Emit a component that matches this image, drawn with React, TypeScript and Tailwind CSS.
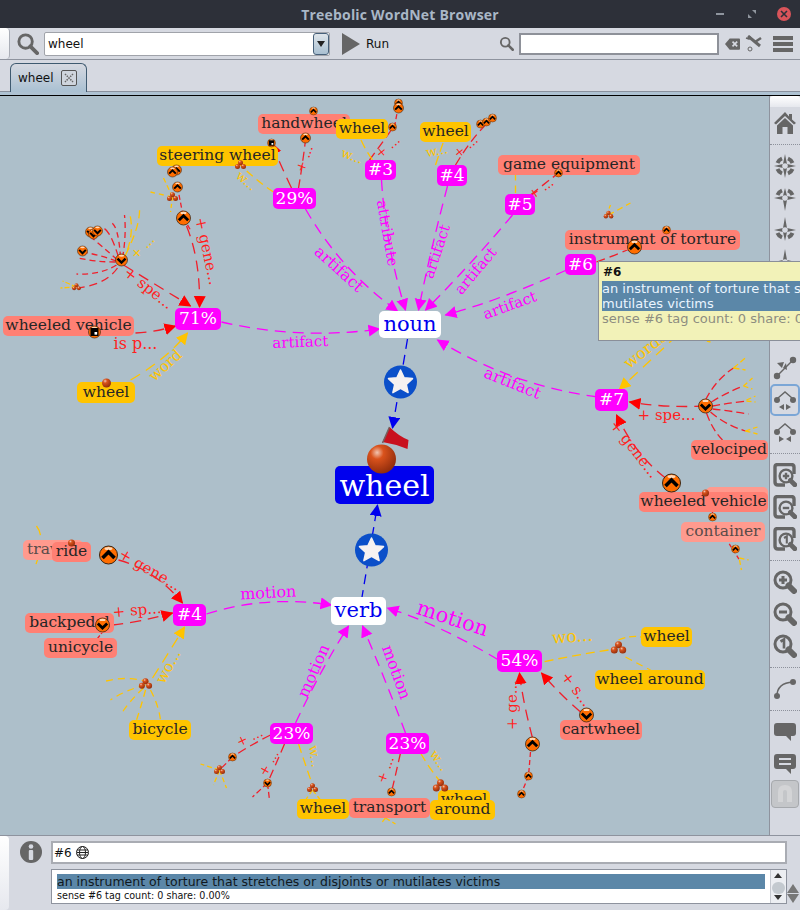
import React from "react";

const G = "#666666";

type Box = { x: number; y: number; w: number; h: number; t: string };

const magenta: Box[] = [
  { x: 175, y: 308, w: 46, h: 22, t: "71%" },
  { x: 273, y: 188, w: 43, h: 21, t: "29%" },
  { x: 365, y: 160, w: 31, h: 20, t: "#3" },
  { x: 437, y: 165, w: 30, h: 21, t: "#4" },
  { x: 505, y: 194, w: 30, h: 21, t: "#5" },
  { x: 565, y: 254, w: 31, h: 21, t: "#6" },
  { x: 595, y: 389, w: 33, h: 22, t: "#7" },
  { x: 173, y: 604, w: 33, h: 22, t: "#4" },
  { x: 497, y: 650, w: 45, h: 22, t: "54%" },
  { x: 270, y: 723, w: 43, h: 21, t: "23%" },
  { x: 386, y: 733, w: 43, h: 21, t: "23%" },
];

const salmon: Box[] = [
  { x: 258, y: 114, w: 92, h: 20, t: "handwheel" },
  { x: 498, y: 155, w: 142, h: 20, t: "game equipment" },
  { x: 565, y: 230, w: 175, h: 20, t: "instrument of torture" },
  { x: 3, y: 316, w: 131, h: 20, t: "wheeled vehicle" },
  { x: 691, y: 440, w: 77, h: 20, t: "velociped" },
  { x: 639, y: 492, w: 129, h: 20, t: "wheeled vehicle" },
  { x: 52, y: 542, w: 39, h: 20, t: "ride" },
  { x: 25, y: 613, w: 89, h: 20, t: "backpedal" },
  { x: 44, y: 638, w: 73, h: 20, t: "unicycle" },
  { x: 560, y: 720, w: 82, h: 20, t: "cartwheel" },
];

const yellow: Box[] = [
  { x: 157, y: 146, w: 121, h: 20, t: "steering wheel" },
  { x: 420, y: 122, w: 51, h: 20, t: "wheel" },
  { x: 77, y: 382, w: 58, h: 21, t: "wheel" },
  { x: 129, y: 720, w: 62, h: 20, t: "bicycle" },
  { x: 641, y: 627, w: 51, h: 20, t: "wheel" },
  { x: 595, y: 670, w: 110, h: 20, t: "wheel around" },
  { x: 297, y: 799, w: 52, h: 20, t: "wheel" },
  { x: 438, y: 790, w: 52, h: 20, t: "wheel" },
  { x: 430, y: 800, w: 65, h: 20, t: "around" },
];

type Edge = [string, string];

const magentaEdges: string[] = [
  "M221 322 Q300 340 379 329",
  "M305 209 Q340 270 397 311",
  "M381 180 Q385 245 405 310",
  "M447 186 Q430 250 418 310",
  "M512 215 Q470 265 425 310",
  "M566 270 Q500 300 445 315",
  "M597 397 Q510 385 437 340",
  "M206 614 Q265 595 331 605",
  "M498 660 Q440 625 387 608",
  "M295 723 Q320 670 348 626",
  "M405 733 Q385 680 362 626",
];

const redArrows: string[] = [
  "M123 265 L190 306",
  "M186 226 Q200 260 199 307",
  "M135 333 Q155 332 175 326",
  "M291 188 Q280 165 271 143",
  "M705 406 Q665 408 629 402",
  "M665 478 Q635 455 616 415",
  "M118 560 Q155 570 182 603",
  "M112 625 Q140 622 172 613",
  "M532 738 Q522 700 519 673",
  "M580 712 Q560 695 541 673",
];

const redLines: Edge[] = [
  ["M298 188 Q302 165 305 140", "9 5"],
  ["M369 160 Q380 145 393 127", "9 5"],
  ["M394 127 L398 105", "5 3"],
  ["M455 165 Q470 140 485 125", "9 5"],
  ["M530 195 Q545 183 558 173", "9 5"],
  ["M596 262 Q615 255 634 247", "9 5"],
  ["M177 187 L183 218", "5 3"],
  ["M183 218 L190 230", "5 3"],
  // fan left of 71%
  ["M118 257 Q108 225 100 228", "8 4"],
  ["M120 258 Q118 225 110 222", "6 4"],
  ["M122 258 Q126 235 124 215", "6 4"],
  ["M117 260 Q100 245 88 235", "6 4"],
  ["M116 261 Q100 255 82 252", "6 4"],
  ["M115 262 Q95 262 78 258", "6 4"],
  ["M116 265 Q100 275 76 274", "6 4"],
  ["M117 268 Q105 285 76 288", "8 5"],
  // fan of velociped
  ["M705 400 Q715 380 733 368", "8 4"],
  ["M711 402 Q725 393 743 386", "8 4"],
  ["M712 406 Q728 403 746 401", "8 4"],
  ["M712 409 Q730 411 748 414", "8 4"],
  ["M710 412 Q725 425 745 431", "8 4"],
  ["M706 413 Q712 430 722 440", "8 4"],
  ["M712 505 L712 517", "4 2"],
  ["M725 538 L739 560", "4 3"],
  ["M92 645 L102 632", "5 2"],
  ["M51 555 L88 556", "5 3"],
  ["M270 735 Q250 745 232 757", "9 5"],
  ["M232 757 L219 770", "6 3"],
  ["M284 744 Q275 765 267 783", "9 5"],
  ["M267 783 L252 797", "6 3"],
  ["M267 783 L269 800", "6 3"],
  ["M400 753 Q395 775 391 792", "9 5"],
  ["M530 752 L528 776", "5 3"],
  ["M528 776 L521 793", "5 3"],
  ["M612 218 L608 212", "3 2"],
];

const yellowArrows: string[] = [
  "M130 380 Q165 360 187 333",
  "M152 678 Q170 650 184 627",
  "M677 335 Q645 365 619 389",
];

const yellowLines: Edge[] = [
  ["M372 160 Q365 150 360 139", "9 5"],
  ["M435 165 Q440 150 443 142", "9 5"],
  ["M515 193 Q515 185 515 175", "8 5"],
  ["M273 192 Q255 180 240 165", "8 5"],
  ["M240 165 L232 150", "5 4"],
  ["M172 197 L163 178", "5 3"],
  ["M172 197 L150 192", "5 4"],
  ["M172 197 L170 212", "4 3"],
  ["M122 262 Q135 235 129 213", "8 5"],
  ["M125 255 Q140 225 139 208", "8 5"],
  ["M76 287 L62 281", "5 2"],
  ["M76 287 L60 288", "5 2"],
  ["M608 215 L630 203", "6 4"],
  ["M606 215 L610 205", "4 3"],
  ["M677 335 L710 342", "6 4"],
  ["M733 368 L746 357", "6 3"],
  ["M733 368 L745 370", "6 3"],
  ["M743 386 L752 378", "5 3"],
  ["M743 386 L752 389", "5 3"],
  ["M746 400 L755 396", "5 3"],
  ["M746 401 L755 402", "5 3"],
  ["M745 431 L757 427", "5 3"],
  ["M745 431 L757 434", "5 3"],
  ["M739 560 L741 570", "5 3"],
  ["M739 558 L748 560", "5 3"],
  ["M148 682 Q125 675 102 682", "7 5"],
  ["M145 685 Q125 690 110 700", "7 5"],
  ["M143 688 Q130 700 122 712", "7 5"],
  ["M145 690 Q141 705 136 720", "7 5"],
  ["M150 690 Q158 705 160 720", "7 5"],
  ["M608 650 Q575 655 542 662", "9 5"],
  ["M625 657 Q640 665 650 670", "7 5"],
  ["M618 640 Q630 635 641 637", "7 4"],
  ["M36 526 Q47 540 31 575", "10 20"],
  ["M298 744 Q305 765 312 785", "9 5"],
  ["M312 790 L305 800", "5 3"],
  ["M312 790 L320 800", "5 3"],
  ["M420 753 Q430 770 440 782", "9 5"],
  ["M219 770 L200 764", "5 3"],
  ["M219 770 L213 785", "5 3"],
  ["M219 770 L226 788", "5 3"],
  ["M385 818 L380 824", "5 3"],
  ["M385 818 L395 824", "5 3"],
];

type Label = { x: number; y: number; r: number; s: number; c: string; t: string };
const M = "#ff00ff";
const R = "#ff1f1f";
const Y = "#ffc400";
const edgeLabels: Label[] = [
  { x: 300, y: 347, r: -2, s: 15, c: M, t: "artifact" },
  { x: 335, y: 273, r: 42, s: 16, c: M, t: "artifact" },
  { x: 382, y: 234, r: 80, s: 15, c: M, t: "attribute" },
  { x: 441, y: 253, r: -72, s: 15, c: M, t: "artifact" },
  { x: 479, y: 274, r: -50, s: 15, c: M, t: "artifact" },
  { x: 511, y: 310, r: -20, s: 15, c: M, t: "artifact" },
  { x: 510, y: 388, r: 22, s: 16, c: M, t: "artifact" },
  { x: 268, y: 598, r: -3, s: 16, c: M, t: "motion" },
  { x: 450, y: 625, r: 18, s: 21, c: M, t: "motion" },
  { x: 318, y: 673, r: -66, s: 16, c: M, t: "motion" },
  { x: 391, y: 674, r: 70, s: 16, c: M, t: "motion" },
  { x: 145, y: 292, r: 38, s: 15, c: R, t: "+ spe..." },
  { x: 202, y: 252, r: 78, s: 15, c: R, t: "+ gene..." },
  { x: 135, y: 349, r: 0, s: 16, c: R, t: "is p..." },
  { x: 168, y: 369, r: -42, s: 15, c: Y, t: "word" },
  { x: 666, y: 420, r: 0, s: 15, c: R, t: "+ spe..." },
  { x: 630, y: 452, r: 52, s: 15, c: R, t: "+ gene..." },
  { x: 147, y: 574, r: 30, s: 15, c: R, t: "+ gene..." },
  { x: 137, y: 615, r: -5, s: 15, c: R, t: "+ sp..." },
  { x: 172, y: 669, r: -62, s: 15, c: Y, t: "wo..." },
  { x: 516, y: 705, r: -90, s: 15, c: R, t: "+ ge..." },
  { x: 572, y: 692, r: 52, s: 15, c: R, t: "+ s..." },
  { x: 572, y: 642, r: -4, s: 17, c: Y, t: "wo..." },
  { x: 648, y: 354, r: -38, s: 16, c: Y, t: "words" },
  { x: 308, y: 160, r: -70, s: 13, c: R, t: "+ ..." },
  { x: 390, y: 150, r: -40, s: 13, c: R, t: "+ ..." },
  { x: 468, y: 150, r: -40, s: 13, c: R, t: "+ ..." },
  { x: 350, y: 160, r: 20, s: 13, c: Y, t: "w..." },
  { x: 437, y: 155, r: -10, s: 13, c: Y, t: "w..." },
  { x: 543, y: 192, r: -35, s: 13, c: R, t: "+ ..." },
  { x: 243, y: 184, r: 40, s: 13, c: Y, t: "w..." },
  { x: 145, y: 250, r: -45, s: 13, c: Y, t: "+ ..." },
  { x: 251, y: 741, r: -25, s: 13, c: R, t: "+ ..." },
  { x: 272, y: 765, r: -60, s: 13, c: R, t: "+ ..." },
  { x: 310, y: 757, r: 82, s: 13, c: Y, t: "w..." },
  { x: 389, y: 771, r: -70, s: 13, c: R, t: "+ ..." },
  { x: 435, y: 763, r: 55, s: 13, c: Y, t: "w..." },
];

type Btn = [number, number, number, "up" | "down" | "box"];
const buttons: Btn[] = [
  [108, 555, 9, "up"],
  [671, 483, 9, "up"],
  [532, 744, 7, "up"],
  [183, 218, 7, "up"],
  [305, 138, 5, "up"],
  [271, 143, 4, "box"],
  [313, 111, 4, "up"],
  [177, 187, 5, "up"],
  [176, 170, 5, "up"],
  [172, 172, 5, "up"],
  [392, 127, 4, "up"],
  [398, 103, 4, "up"],
  [398, 108, 5, "up"],
  [480, 124, 4, "up"],
  [486, 122, 4, "up"],
  [492, 118, 4, "up"],
  [558, 173, 4, "up"],
  [634, 247, 7, "up"],
  [666, 230, 4, "up"],
  [121, 260, 6, "down"],
  [90, 232, 5, "down"],
  [93, 234, 5, "down"],
  [97, 231, 5, "down"],
  [82, 251, 5, "down"],
  [94, 332, 6, "box"],
  [705, 406, 7, "down"],
  [712, 517, 4, "up"],
  [735, 549, 4, "up"],
  [102, 625, 7, "down"],
  [586, 715, 7, "down"],
  [232, 757, 4, "up"],
  [267, 783, 4, "down"],
  [391, 792, 4, "up"],
  [528, 776, 4, "up"],
  [521, 794, 4, "up"],
];

const clusters: [number, number, number][] = [
  [145, 684, 3],
  [618, 648, 3.5],
  [677, 335, 3],
  [608, 215, 2.2],
  [440, 786, 3.5],
  [312, 788, 2.5],
  [219, 770, 2.5],
  [76, 287, 2],
  [240, 165, 2.5],
  [172, 197, 2.5],
];

function Ball({ x, y, r }: { x: number; y: number; r: number }) {
  return <circle cx={x} cy={y} r={r} fill="url(#ball)" />;
}

function OrangeButton({ x, y, r, kind }: { x: number; y: number; r: number; kind: Btn[3] }) {
  const k = r / 9;
  return (
    <g transform={`translate(${x} ${y}) scale(${k})`}>
      <circle r={9} fill="#ff6d00" stroke="#3b2410" strokeWidth={1} />
      <ellipse cx={0} cy={-6.5} rx={4} ry={1.5} fill="#ffd9b8" />
      {kind === "up" && <path d="M-6 3 L0 -3 L6 3" fill="none" stroke="#000" strokeWidth={3.6} />}
      {kind === "down" && <path d="M-6 -2 L0 4 L6 -2" fill="none" stroke="#000" strokeWidth={3.6} />}
      {kind === "box" && (
        <g>
          <rect x={-6} y={-6} width={12} height={12} fill="#000" />
          <rect x={0} y={0} width={4} height={4} fill="#fff" />
        </g>
      )}
    </g>
  );
}

function Star({ x, y }: { x: number; y: number }) {
  return (
    <g transform={`translate(${x} ${y})`}>
      <circle r={16.5} fill="#0b4fc9" />
      <path
        d="M0 -12 L3.6 -4.2 L12 -3.4 L5.8 2.4 L7.6 10.6 L0 6.4 L-7.6 10.6 L-5.8 2.4 L-12 -3.4 L-3.6 -4.2Z"
        fill="#f6f1f1"
        stroke="#f6f1f1"
        strokeWidth={1.5}
        strokeLinejoin="round"
      />
    </g>
  );
}

function GraphLines() {
  return (
    <svg viewBox="0 96 768 739" className="absolute inset-0 h-full w-full font-['DejaVu_Serif',serif]">
      <defs>
        {[
          ["m", M],
          ["r", "#ff0000"],
          ["y", Y],
          ["b", "#0000ee"],
        ].map(([id, c]) => (
          <marker key={id} id={`a-${id}`} markerUnits="userSpaceOnUse" markerWidth="14" markerHeight="14" refX="11" refY="6" orient="auto">
            <path d="M0 0 L12 6 L0 12 Z" fill={c} />
          </marker>
        ))}
      </defs>
      <g fill="none" strokeWidth={1.3}>
        {magentaEdges.map((d) => (
          <path key={d} d={d} stroke={M} strokeDasharray="11 7" markerEnd="url(#a-m)" />
        ))}
        {redArrows.map((d) => (
          <path key={d} d={d} stroke="#f01f2b" strokeDasharray="11 7" markerEnd="url(#a-r)" />
        ))}
        {redLines.map(([d, dash]) => (
          <path key={d} d={d} stroke="#f01f2b" strokeDasharray={dash} />
        ))}
        {yellowArrows.map((d) => (
          <path key={d} d={d} stroke={Y} strokeDasharray="11 7" markerEnd="url(#a-y)" />
        ))}
        {yellowLines.map(([d, dash]) => (
          <path key={d} d={d} stroke={Y} strokeDasharray={dash} />
        ))}
        <path d="M407 339 L392 428" stroke="#0000ee" strokeDasharray="10 6" markerEnd="url(#a-b)" />
        <path d="M361 600 L377 505" stroke="#0000ee" strokeDasharray="10 6" markerEnd="url(#a-b)" />
      </g>
      {edgeLabels.map((l) => (
        <text
          key={`${l.x}-${l.y}`}
          x={l.x}
          y={l.y}
          fill={l.c}
          fontSize={l.s}
          textAnchor="middle"
          transform={`rotate(${l.r} ${l.x} ${l.y})`}
        >
          {l.t}
        </text>
      ))}
    </svg>
  );
}

function GraphMarks() {
  return (
    <svg viewBox="0 96 768 739" className="absolute inset-0 h-full w-full">
      <defs>
        <radialGradient id="ball" cx="35%" cy="28%" r="75%">
          <stop offset="0%" stopColor="#f1c4b0" />
          <stop offset="30%" stopColor="#d9521c" />
          <stop offset="100%" stopColor="#8f2c0c" />
        </radialGradient>
      </defs>
      {clusters.map(([x, y, r]) => (
        <g key={`${x}-${y}`}>
          <Ball x={x} y={y - r * 0.9} r={r} />
          <Ball x={x - r * 1.2} y={y + r * 0.6} r={r} />
          <Ball x={x + r * 1.2} y={y + r * 0.6} r={r} />
        </g>
      ))}
      <Ball x={106} y={383} r={4.5} />
      <Ball x={71} y={543} r={3.5} />
      <Ball x={705} y={493} r={3.5} />
      {buttons.map(([x, y, r, kind], i) => (
        <OrangeButton key={i} x={x} y={y} r={r} kind={kind} />
      ))}
      <Star x={400} y={382} />
      <Star x={371} y={550} />
      <path d="M389 427 Q398 436 408 440 L407 449 Q395 444 382 442Z" fill="#c8101e" />
      <path d="M389 427 L382 443" stroke="#77605f" strokeWidth={1.5} />
      <circle cx={381} cy={459} r={14.5} fill="url(#ball)" />
    </svg>
  );
}

function NodeBox({ b, className }: { b: Box; className: string }) {
  return (
    <div
      className={`absolute flex items-center justify-center whitespace-pre rounded-[5px] ${className}`}
      style={{ left: b.x, top: b.y - 96, width: b.w, height: b.h }}
    >
      {b.t}
    </div>
  );
}

function Graph() {
  return (
    <div className="relative flex-1 overflow-hidden bg-[#adbfca] font-['DejaVu_Serif',serif] text-[15.5px] text-[#262626]">
      <GraphLines />
      <div
        className="absolute flex items-center justify-center rounded-[5px] bg-[#ff9a8e] text-[#5a4c4a]"
        style={{ left: 681, top: 522 - 96, width: 84, height: 20 }}
      >
        container
      </div>
      <div className="absolute rounded-[5px] bg-[#ff9a8e]" style={{ left: 706, top: 487 - 96, width: 62, height: 20 }} />
      <div
        className="absolute flex items-center rounded-[5px] bg-[#ff9a8e] pl-[4px] text-[#5a4c4a]"
        style={{ left: 23, top: 540 - 96, width: 60, height: 20 }}
      >
        trav
      </div>
      {yellow.map((b) => (
        <NodeBox key={`${b.x}-${b.y}`} b={b} className="bg-[#ffc400]" />
      ))}
      {salmon.map((b) => (
        <NodeBox key={`${b.x}-${b.y}`} b={b} className="bg-[#ff8074]" />
      ))}
      <NodeBox b={{ x: 349, y: 798, w: 81, h: 20, t: "transport" }} className="bg-[#ff8074]" />
      <NodeBox b={{ x: 336, y: 119, w: 52, h: 20, t: "wheel" }} className="bg-[#ffc400]" />
      {magenta.map((b) => (
        <NodeBox key={`${b.x}-${b.y}`} b={b} className="bg-[#ff00ff] text-[17px] text-white" />
      ))}
      <NodeBox b={{ x: 379, y: 311, w: 62, h: 27, t: "noun" }} className="bg-white text-[21px] text-[#0000ee]" />
      <NodeBox b={{ x: 331, y: 597, w: 55, h: 28, t: "verb" }} className="bg-white text-[21px] text-[#0000ee]" />
      <NodeBox b={{ x: 335, y: 466, w: 99, h: 38, t: "wheel" }} className="bg-[#0000ee] text-[30px] text-white" />
      <GraphMarks />
    </div>
  );
}

function SearchIcon({ size }: { size: number }) {
  return (
    <svg width={size} height={size} viewBox="0 0 24 24" fill="none" stroke={G}>
      <circle cx="10" cy="10" r="7" strokeWidth="3" />
      <path d="M15 15 L22 22" strokeWidth="4" strokeLinecap="round" />
    </svg>
  );
}

function Compass({ v }: { v: number }) {
  const top = v === 1 || v === 2;
  const bottom = v === 1 || v === 3;
  return (
    <svg width="24" height="26" viewBox="0 0 24 26" fill={G}>
      <path
        d={
          v === 2
            ? "M12 3 L14 11 L23 13 L14 15 L12 26 L10 15 L1 13 L10 11Z"
            : v === 3
              ? "M12 0 L14 11 L23 13 L14 15 L12 24 L10 15 L1 13 L10 11Z"
              : "M12 1 L14 11 L23 13 L14 15 L12 25 L10 15 L1 13 L10 11Z"
        }
      />
      <circle cx="12" cy="13" r="2.8" fill="#d6d9e1" />
      <g fill="none" stroke={G} strokeWidth="4">
        {top && <path d="M4.5 10 A8 8 0 0 1 9 5.5 M15 5.5 A8 8 0 0 1 19.5 10" />}
        {bottom && <path d="M4.5 16 A8 8 0 0 0 9 20.5 M15 20.5 A8 8 0 0 0 19.5 16" />}
      </g>
    </svg>
  );
}

function LineIcon({ flip }: { flip?: boolean }) {
  return (
    <svg width="24" height="24" viewBox="0 0 24 24" fill={G}>
      <circle cx="4" cy="20" r="3.2" />
      <circle cx="20" cy="4" r="3.2" />
      <path d="M4 20 L20 4" stroke={G} strokeWidth="1.5" />
      {flip ? <path d="M4 7 L11 6 L9 12 Z M10 12 L13 7 L14 14Z" /> : <path d="M5 8 L11 8 L8 13 Z M12 6 L12 12 L16 8Z" />}
    </svg>
  );
}

function TreeIcon({ inward }: { inward?: boolean }) {
  return (
    <svg width="24" height="22" viewBox="0 0 24 22" fill={G}>
      <circle cx="4" cy="11" r="3" />
      <circle cx="20" cy="11" r="3" />
      <path d="M5 9 L12 3 L19 9" fill="none" stroke={G} strokeWidth="1.5" />
      {inward ? <path d="M6 15 L11 18 L6 21Z M18 15 L13 18 L18 21Z" /> : <path d="M11 15 L6 18 L11 21Z M13 15 L18 18 L13 21Z" />}
    </svg>
  );
}

function Glass({ mark }: { mark: string }) {
  return (
    <g>
      <circle cx="10" cy="10" r="8" fill="none" stroke={G} strokeWidth="3" />
      <path d="M15.5 15.5 L21 21" stroke={G} strokeWidth="6" strokeLinecap="round" />
      {mark === "+" && <path d="M6 10 H14 M10 6 V14" stroke={G} strokeWidth="3" />}
      {mark === "-" && <path d="M6 10 H14" stroke={G} strokeWidth="3" />}
      {mark === "1" && <path d="M7.5 7.5 L11 5.5 V14.5" fill="none" stroke={G} strokeWidth="2.6" />}
    </g>
  );
}

function FitIcon({ mark }: { mark: string }) {
  return (
    <svg width="24" height="24" viewBox="0 0 24 24">
      <path d="M21 11 V4 Q21 1.5 18 1.5 H5 Q2 1.5 2 4 V19 Q2 22 5 22 H12" fill="none" stroke={G} strokeWidth="3.4" />
      <g transform="translate(5 5) scale(0.8)">
        <Glass mark={mark} />
      </g>
    </svg>
  );
}

function GlassIcon({ mark }: { mark: string }) {
  return (
    <svg width="24" height="24" viewBox="0 0 24 24">
      <Glass mark={mark} />
    </svg>
  );
}

function SideButton({ children, selected }: { children: React.ReactNode; selected?: boolean }) {
  return (
    <div
      className={`flex h-[32px] w-[30px] items-center justify-center rounded-[5px] ${
        selected ? "border-2 border-[#7ba6d6]" : ""
      }`}
    >
      {children}
    </div>
  );
}

function Dots() {
  return <div className="my-[5px] h-0 w-full border-t border-dotted border-[#8d919b]" />;
}

function SideBar() {
  return (
    <div className="flex w-[31px] flex-col items-center border-l border-[#8e939e] bg-[#d6d9e1]">
      <div className="h-[11px] w-full rounded-t-[3px] bg-gradient-to-b from-white to-[#e6e8ee]" />
      <SideButton>
        <svg width="24" height="24" viewBox="0 0 24 24" fill={G}>
          <path d="M12 1 L1 12 L3 13.5 L12 5 L21 13.5 L23 12 L19 8.5 V3 H16 V5.5Z" />
          <path d="M4 14.5 L12 7 L20 14.5 V23 H14.5 V16 H9.5 V23 H4Z" />
        </svg>
      </SideButton>
      <Dots />
      <SideButton><Compass v={1} /></SideButton>
      <SideButton><Compass v={2} /></SideButton>
      <SideButton><Compass v={3} /></SideButton>
      <SideButton><Compass v={3} /></SideButton>
      <SideButton><Compass v={3} /></SideButton>
      <SideButton><LineIcon /></SideButton>
      <div className="h-[10px]" />
      <SideButton><LineIcon flip /></SideButton>
      <SideButton selected><TreeIcon /></SideButton>
      <SideButton><TreeIcon inward /></SideButton>
      <Dots />
      <SideButton><FitIcon mark="+" /></SideButton>
      <SideButton><FitIcon mark="-" /></SideButton>
      <SideButton><FitIcon mark="1" /></SideButton>
      <Dots />
      <SideButton><GlassIcon mark="+" /></SideButton>
      <SideButton><GlassIcon mark="-" /></SideButton>
      <SideButton><GlassIcon mark="1" /></SideButton>
      <Dots />
      <SideButton>
        <svg width="24" height="24" viewBox="0 0 24 24" fill={G}>
          <circle cx="4" cy="19" r="3" />
          <circle cx="20" cy="5" r="3" />
          <path d="M4 19 Q4 6 20 5" fill="none" stroke={G} strokeWidth="1.5" />
        </svg>
      </SideButton>
      <Dots />
      <SideButton>
        <svg width="24" height="20" viewBox="0 0 24 20" fill={G}>
          <path d="M4 1 H20 Q23 1 23 4 V11 Q23 14 20 14 H18 L18 19 L13 14 H4 Q1 14 1 11 V4 Q1 1 4 1Z" />
        </svg>
      </SideButton>
      <SideButton>
        <svg width="24" height="22" viewBox="0 0 24 22" fill={G}>
          <path d="M4 1 H20 Q23 1 23 4 V13 Q23 16 20 16 H18 L18 21 L13 16 H4 Q1 16 1 13 V4 Q1 1 4 1Z" />
          <path d="M6 6 H18 M6 11 H18" stroke="#d6d9e1" strokeWidth="2" />
        </svg>
      </SideButton>
      <div className="flex h-[28px] w-[28px] items-center justify-center rounded-[4px] border border-[#a6a9ad] bg-[#c4c6c9]">
        <svg width="18" height="20" viewBox="0 0 18 20" fill="#d3d4d6">
          <path d="M2 18 V8 Q2 1 9 1 Q16 1 16 8 V18 H11 V8 Q11 6 9 6 Q7 6 7 8 V18Z" />
        </svg>
      </div>
    </div>
  );
}

function Tooltip() {
  return (
    <div className="absolute left-[598px] top-[165px] h-[80px] w-[202px] overflow-hidden border border-r-0 border-[#8a8f99] bg-[#f2f2b8] px-[3px] pt-[3px] font-['DejaVu_Sans',sans-serif] text-[13px] leading-[15px]">
      <div className="pl-[1px] text-[12px] font-bold text-[#111]">#6</div>
      <div className="mt-[1px] w-[300px] whitespace-pre bg-[#5b87a8] text-[#eaf5ff]">
        {"an instrument of torture that stretches or disjoints or\nmutilates victims"}
      </div>
      <div className="whitespace-nowrap text-[#8d8d80]">sense #6 tag count: 0 share: 0.00%</div>
    </div>
  );
}

export default function App() {
  return (
    <div className="flex h-[910px] w-[800px] flex-col overflow-hidden bg-[#d6d9e1] font-['DejaVu_Sans',sans-serif] text-[12px] text-[#111]">
      <div className="relative flex h-[28px] items-center justify-center bg-[#2d3039] font-['Open_Sans',sans-serif] text-[14px] font-bold tracking-[0.2px] text-[#a9b7c6]">
        Treebolic WordNet Browser
        <div className="absolute left-[716px] top-[13px] h-[2px] w-[8px] bg-[#8f959e]" />
        <svg className="absolute left-[748px] top-[10px]" width="8" height="8" viewBox="0 0 8 8" fill="#8f959e">
          <path d="M4 0 H8 V4Z M0 4 L4 8 H0Z" />
        </svg>
        <div className="absolute left-[777px] top-[7px] flex h-[14px] w-[14px] items-center justify-center rounded-full bg-[#d9545a]">
          <svg width="8" height="8" viewBox="0 0 8 8" stroke="#2d3039" strokeWidth="1.6">
            <path d="M1 1 L7 7 M7 1 L1 7" />
          </svg>
        </div>
      </div>

      <div className="flex h-[32px] items-center border-b border-[#8e939e]">
        <div className="h-full w-[10px] rounded-r-[4px] border-r border-[#a9adb6] bg-gradient-to-b from-white to-[#e6e8ee]" />
        <div className="ml-[6px] mr-[5px]">
          <SearchIcon size={23} />
        </div>
        <div className="flex h-[24px] w-[286px] items-center rounded-[2px] border border-[#a0a3aa] bg-white pl-[3px]">
          <span className="flex-1">wheel</span>
          <div className="flex h-[22px] w-[16px] items-center justify-center rounded-[3px] border border-[#47607a] bg-gradient-to-b from-[#dfe5ea] to-[#a9c0d2]">
            <div className="h-0 w-0 border-x-[4px] border-t-[6px] border-x-transparent border-t-[#222]" />
          </div>
        </div>
        <svg className="ml-[12px]" width="19" height="22" viewBox="0 0 19 22" fill={G}>
          <path d="M0 0 L18 11 L0 22Z" />
        </svg>
        <span className="ml-[5px]">Run</span>
        <div className="ml-[110px]">
          <SearchIcon size={15} />
        </div>
        <div className="ml-[5px] h-[22px] w-[200px] border-2 border-[#8e9199] bg-white" />
        <svg className="ml-[6px]" width="15" height="12" viewBox="0 0 16 12" fill={G}>
          <path d="M5 0 H15 Q16 0 16 1 V11 Q16 12 15 12 H5 L0 6Z" />
          <path d="M8 3.5 L13 8.5 M13 3.5 L8 8.5" stroke="#d6d9e1" strokeWidth="1.8" />
        </svg>
        <svg className="ml-[5px]" width="17" height="17" viewBox="0 0 17 17" fill="none" stroke={G}>
          <path d="M3 1 L15 11" strokeWidth="3" />
          <path d="M1 3 L4 4 L5 1" strokeWidth="1.5" />
          <path d="M16 3 L10 7" strokeWidth="2.5" />
          <circle cx="5" cy="14" r="2" strokeWidth="1" />
        </svg>
        <div className="ml-[11px] flex w-[20px] flex-col gap-[2px]">
          <div className="h-[4px] bg-[#666]" />
          <div className="h-[4px] bg-[#666]" />
          <div className="h-[4px] bg-[#666]" />
        </div>
      </div>

      <div className="relative h-[32px] border-b border-[#8a919d]">
        <div className="absolute left-[10px] top-[3px] flex h-[29px] w-[77px] items-center rounded-t-[6px] border border-b-0 border-[#3f5a70] bg-gradient-to-b from-[#d6d9e1] to-[#a9c0d2] pl-[7px]">
          wheel
          <div className="ml-[7px] flex h-[16px] w-[16px] items-center justify-center rounded-[2px] border border-[#555] bg-[#cfd5dd]">
            <svg width="10" height="10" viewBox="0 0 10 10" stroke="#666" strokeWidth="1.5" strokeDasharray="1.5 1">
              <path d="M1 1 L9 9 M9 1 L1 9" />
            </svg>
          </div>
        </div>
      </div>
      <div className="h-[3px] bg-[#aec2d2]" />

      <div className="relative flex flex-1 border-t border-black">
        <Graph />
        <SideBar />
        <Tooltip />
      </div>

      <div className="relative flex h-[75px] border-t border-[#8e939e]">
        <div className="w-[9px] rounded-r-[4px] bg-gradient-to-b from-white to-[#e6e8ee]" />
        <svg className="ml-[11px] mt-[5px]" width="22" height="22" viewBox="0 0 22 22" fill="#666">
          <circle cx="11" cy="11" r="11" />
          <circle cx="11" cy="5.5" r="2.3" fill="#d6d9e1" />
          <rect x="8.8" y="9" width="4.4" height="10" rx="1" fill="#d6d9e1" />
        </svg>
        <div className="ml-[9px] flex flex-1 flex-col pr-[13px] pt-[5px]">
          <div className="flex h-[23px] items-center gap-[4px] border-2 border-[#a9acb3] bg-white pl-[1px]">
            #6
            <svg width="13" height="13" viewBox="0 0 13 13" fill="none" stroke="#222" strokeWidth="1">
              <circle cx="6.5" cy="6.5" r="6" />
              <ellipse cx="6.5" cy="6.5" rx="3" ry="6" />
              <path d="M1 4 H12 M1 6.5 H12 M1 9 H12" />
            </svg>
          </div>
          <div className="mt-[5px] flex h-[35px] items-stretch border border-[#8e939e] bg-white">
            <div className="flex-1 pl-[5px] pt-[4px]">
              <div className="h-[15px] w-[708px] bg-[#5b87a8] text-[12.5px] leading-[15px] text-[#101820]">
                an instrument of torture that stretches or disjoints or mutilates victims
              </div>
              <div className="text-[9.6px] leading-[14px]">sense #6 tag count: 0 share: 0.00%</div>
            </div>
            <div className="relative w-[16px] border-l border-[#c6c9d0] bg-[#eceef2]">
              <div className="absolute left-[3px] top-[3px] h-0 w-0 border-x-[4px] border-b-[5px] border-x-transparent border-b-[#333]" />
              <div className="absolute left-[1px] top-[12px] h-[12px] w-[13px] rounded-full bg-[#c3c9cf]" />
              <div className="absolute bottom-[3px] left-[3px] h-0 w-0 border-x-[4px] border-t-[5px] border-x-transparent border-t-[#333]" />
            </div>
          </div>
        </div>
        <div className="absolute bottom-[7px] right-[1px] flex flex-col gap-[1px]">
          <div className="h-0 w-0 border-x-[6px] border-b-[9px] border-x-transparent border-b-[#777]" />
          <div className="h-0 w-0 border-x-[6px] border-t-[9px] border-x-transparent border-t-[#777]" />
        </div>
      </div>
    </div>
  );
}
